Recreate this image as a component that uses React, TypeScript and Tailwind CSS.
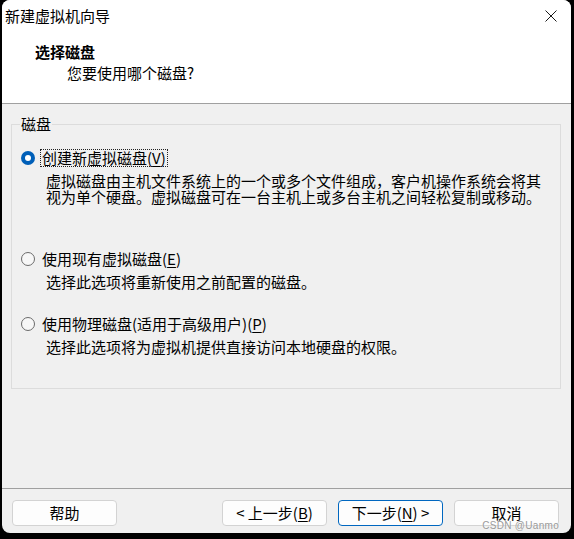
import React from 'react';

const FONT = "'Noto Sans CJK SC', 'Noto Sans', sans-serif";

// Win11 style radio: filled accent ring when checked, grey outline otherwise
function Radio({ checked }: { checked?: boolean }) {
  if (checked) {
    return (
      <span className="flex h-[14px] w-[14px] shrink-0 items-center justify-center rounded-full bg-[#005fb8]">
        <span className="h-[6px] w-[6px] rounded-full bg-white" />
      </span>
    );
  }
  return <span className="h-[14px] w-[14px] shrink-0 rounded-full border border-[#6b6b6b] bg-[#f7f7f7]" />;
}

function Option({
  checked,
  label,
  hotkey,
  lines,
  className,
}: {
  checked?: boolean;
  label: string;
  hotkey: string;
  lines: string[];
  className?: string;
}) {
  return (
    <div className={className}>
      <div className="flex h-[22px] items-center">
        <Radio checked={checked} />
        <span
          className={`ml-[5px] flex h-[18px] items-center border px-[1px] ${
            checked ? 'border-dotted border-[#222]' : 'border-transparent'
          }`}
        >
          {label}(<span className="underline underline-offset-2">{hotkey}</span>)
        </span>
      </div>
      <div className="mt-[4px] pl-[25px] leading-[16px]">
        {lines.map((l) => (
          <div key={l}>{l}</div>
        ))}
      </div>
    </div>
  );
}

function Button({ children, primary }: { children: React.ReactNode; primary?: boolean }) {
  return (
    <button
      className={`flex h-[26px] w-[105px] items-center justify-center rounded-[4px] border bg-[#fdfdfd] text-[15px] text-black ${
        primary ? 'border-[#0067c0]' : 'border-[#d3d3d3]'
      }`}
    >
      {children}
    </button>
  );
}

export default function App() {
  return (
    <div className="h-[539px] w-[574px] bg-black" style={{ fontFamily: FONT }}>
      <div className="relative ml-[2px] flex h-[533px] w-[569px] flex-col overflow-hidden rounded-[8px] bg-[#f0f0f0] text-black">
        {/* title bar */}
        <div className="flex h-[32px] items-center justify-between bg-white pl-[3px] pr-[14px] text-[15px]">
          <span>新建虚拟机向导</span>
          <svg width="12" height="12" viewBox="0 0 12 12" className="text-[#1a1a1a]">
            <path d="M0.5 0.5 L11.5 11.5 M11.5 0.5 L0.5 11.5" stroke="currentColor" strokeWidth="1" />
          </svg>
        </div>

        {/* wizard header */}
        <div className="h-[72px] border-b border-[#a0a0a0] bg-white pt-[9px] text-[15px] leading-[21px]">
          <div className="pl-[33px] font-bold">选择磁盘</div>
          <div className="pl-[65px]">您要使用哪个磁盘?</div>
        </div>

        {/* body */}
        <div className="flex-1 pl-[9px] pr-[10px] pt-[10px] text-[15px]">
          <fieldset className="h-[275px] border border-[#dcdcdc] pl-[9px]">
            <legend className="ml-[-1px] px-[1px] leading-[20px]">磁盘</legend>
            <Option
              className="mt-[13px]"
              checked
              label="创建新虚拟磁盘"
              hotkey="V"
              lines={[
                '虚拟磁盘由主机文件系统上的一个或多个文件组成，客户机操作系统会将其',
                '视为单个硬盘。虚拟磁盘可在一台主机上或多台主机之间轻松复制或移动。',
              ]}
            />
            <Option
              className="mt-[43px]"
              label="使用现有虚拟磁盘"
              hotkey="E"
              lines={['选择此选项将重新使用之前配置的磁盘。']}
            />
            <Option
              className="mt-[23px]"
              label="使用物理磁盘(适用于高级用户)"
              hotkey="P"
              lines={['选择此选项将为虚拟机提供直接访问本地硬盘的权限。']}
            />
          </fieldset>
        </div>

        {/* footer buttons */}
        <div className="flex items-center justify-between border-t border-[#a0a0a0] pb-[7px] pl-[10px] pr-[12px] pt-[11px]">
          <Button>帮助</Button>
          <div className="flex gap-[11px]">
            <Button>
              &lt; 上一步(<span className="underline underline-offset-2">B</span>)
            </Button>
            <Button primary>
              下一步(<span className="underline underline-offset-2">N</span>) &gt;
            </Button>
            <Button>取消</Button>
          </div>
        </div>

        {/* watermark stamped over the cancel button */}
        <span
          className="absolute bottom-[1px] right-[12px] text-[10px] leading-[12px] tracking-[0.3px] text-[#9a9a9a] [text-shadow:0_0_2px_#ffffff]"
          style={{ fontFamily: "'Liberation Sans', Arial, sans-serif" }}
        >
          CSDN @Uanmo
        </span>
      </div>
    </div>
  );
}
